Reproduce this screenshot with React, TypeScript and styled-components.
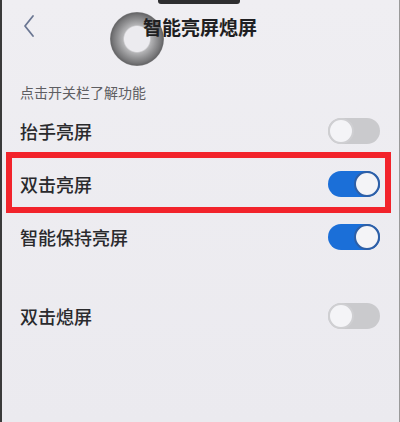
import styled, { createGlobalStyle } from 'styled-components';

const GlobalStyle = createGlobalStyle`
  html, body {
    margin: 0;
    padding: 0;
    background: #eeedf1;
  }
  body {
    font-family: "Noto Sans CJK SC", "Noto Sans", sans-serif;
  }
`;

const Screen = styled.div`
  position: relative;
  width: 400px;
  height: 422px;
  overflow: hidden;
  background: linear-gradient(#efeef2, #ebeaef);
  box-shadow: inset 2px 0 0 #3a3a3a, inset -1px 0 0 #9a9a9a;
`;

const Notch = styled.div`
  position: absolute;
  top: 0;
  left: 158px;
  width: 82px;
  height: 4px;
  background: #2e2e30;
  border-radius: 0 0 3px 3px;
`;

/* touch indicator left by the screen recorder */
const TouchRing = styled.div`
  position: absolute;
  left: 110px;
  top: 12px;
  width: 54px;
  height: 54px;
  border-radius: 50%;
  background: radial-gradient(
    circle closest-side,
    #ecebef 0,
    #ecebef 12.5px,
    #b4b4b6 14px,
    #949496 19px,
    #767678 24px,
    #666668 26px,
    #8a8a8c 27px
  );
`;

const Header = styled.header`
  position: relative;
  z-index: 1;
  height: 56px;
  display: grid;
  grid-template-columns: 1fr auto 1fr;
  align-items: center;
  padding: 0 18px 4px;
  box-sizing: border-box;
`;

const BackButton = styled.button`
  justify-self: start;
  width: 22px;
  height: 26px;
  padding: 0;
  border: none;
  background: none;
  display: flex;
  align-items: center;
  justify-content: center;
`;

const Title = styled.h1`
  margin: 0;
  font-size: 19px;
  font-weight: 700;
  color: #1f1f22;
  line-height: 1;
`;

const Caption = styled.div`
  padding: 28px 20px 0;
  height: 20px;
  line-height: 16px;
  font-size: 14px;
  color: #5e5e62;
`;

const List = styled.div`
  display: flex;
  flex-direction: column;
`;

const Row = styled.div<{ $gapBefore?: boolean }>`
  position: relative;
  height: 53px;
  display: flex;
  align-items: center;
  justify-content: space-between;
  padding: 0 20px;
  margin-top: ${(p) => (p.$gapBefore ? '26px' : '0')};
`;

const Label = styled.span`
  font-size: 18px;
  font-weight: 500;
  color: #2a2a2d;
  line-height: 1;
`;

const Highlight = styled.div`
  position: absolute;
  left: 6px;
  right: 9px;
  top: -5px;
  bottom: -3px;
  border: 6px solid #f2232b;
  pointer-events: none;
`;

const Track = styled.div<{ $on: boolean }>`
  width: 52px;
  height: 26px;
  border-radius: 13px;
  display: flex;
  justify-content: ${(p) => (p.$on ? 'flex-end' : 'flex-start')};
  background: ${(p) => (p.$on ? '#1b6fd8' : '#cacacd')};
`;

const Knob = styled.div<{ $on: boolean }>`
  width: 26px;
  height: 26px;
  box-sizing: border-box;
  border-radius: 50%;
  background: #f4f4f7;
  border: 2px solid ${(p) => (p.$on ? '#2e5fa6' : '#cfcfd2')};
`;

function Toggle({ on }: { on: boolean }) {
  return (
    <Track $on={on}>
      <Knob $on={on} />
    </Track>
  );
}

const items = [
  { label: '抬手亮屏', on: false },
  { label: '双击亮屏', on: true, marked: true },
  { label: '智能保持亮屏', on: true },
  { label: '双击熄屏', on: false, gapBefore: true },
];

export default function App() {
  return (
    <>
      <GlobalStyle />
      <Screen>
        <TouchRing />
        <Header>
          <BackButton aria-label="返回">
            <svg width="14" height="24" viewBox="0 0 14 24">
              <path
                d="M11 2 L3 12 L11 22"
                fill="none"
                stroke="#6a7692"
                strokeWidth="1.8"
                strokeLinecap="round"
                strokeLinejoin="round"
              />
            </svg>
          </BackButton>
          <Title>智能亮屏熄屏</Title>
        </Header>
        <Caption>点击开关栏了解功能</Caption>
        <List>
          {items.map((item) => (
            <Row key={item.label} $gapBefore={item.gapBefore}>
              <Label>{item.label}</Label>
              <Toggle on={item.on} />
              {item.marked && <Highlight />}
            </Row>
          ))}
        </List>
        <Notch />
      </Screen>
    </>
  );
}
